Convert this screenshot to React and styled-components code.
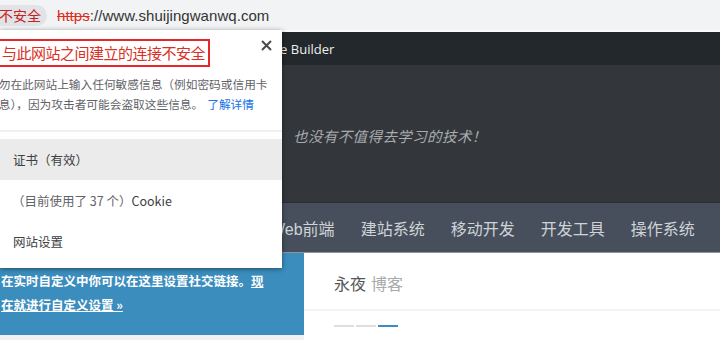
import React from "react";
import styled, { createGlobalStyle } from "styled-components";

const GlobalStyle = createGlobalStyle`
  html, body { margin: 0; padding: 0; }
  body {
    background: #f1f1f1;
    font-family: "Open Sans", "Liberation Sans", "Noto Sans CJK SC", sans-serif;
  }
`;

const CJK = `"Noto Sans CJK SC", "Noto Sans", sans-serif`;

const Page = styled.div`
  position: relative;
  width: 720px;
  height: 340px;
  overflow: hidden;
  background: #f1f1f1;
`;

const BrowserBar = styled.div`
  height: 30px;
  background: #f1f3f4;
  border-bottom: 2px solid #fbfbfb;
  display: flex;
  align-items: center;
  gap: 10px;
  font-family: "Liberation Sans", Arial, ${CJK};
  font-size: 15px;
`;

const Badge = styled.span`
  display: flex;
  align-items: center;
  height: 21px;
  padding: 0 6px 0 0;
  margin-left: -1px;
  border-radius: 0 11px 11px 0;
  background: #e1e3e6;
  color: #c5221f;
  font-family: ${CJK};
  font-size: 14px;
`;

const Url = styled.span`
  color: #333;
  letter-spacing: 0.05px;
`;

const Scheme = styled.span`
  color: #d93025;
  text-decoration: line-through;
`;

const AdminBar = styled.div`
  height: 33px;
  background: #23282d;
  color: #eee;
  display: flex;
  align-items: center;
  padding-left: 258px;
  font-size: 13px;
  font-family: "Open Sans", "Liberation Sans", sans-serif;
`;

const Header = styled.div`
  height: 137px;
  background: #33373c;
  display: flex;
  align-items: center;
  padding: 4px 0 0 293px;
  box-sizing: border-box;
`;

const Tagline = styled.div`
  font-family: ${CJK};
  font-style: italic;
  font-size: 14.5px;
  color: #a9abad;
  letter-spacing: 0.4px;
`;

const Nav = styled.nav`
  height: 49px;
  background: #464f5b;
  border-top: 1px solid #2b2f34;
  border-bottom: 1px solid #8d959e;
  display: flex;
  align-items: center;
  gap: 26px;
  padding-left: 270px;
`;

const NavItem = styled.span`
  font-family: "Liberation Sans", Arial, ${CJK};
  font-size: 16px;
  color: #cfd3d7;
  white-space: nowrap;
`;

const Content = styled.div`
  display: grid;
  grid-template-columns: 304px 1fr;
  height: 89px;
`;

const LeftCol = styled.div`
  display: flex;
  flex-direction: column;
`;

const BluePanel = styled.div`
  height: 82px;
  background: #3b8dbd;
  color: #fff;
  font-family: ${CJK};
  font-weight: bold;
  font-size: 12.5px;
  line-height: 24px;
  padding: 16px 0 0 1px;
  box-sizing: border-box;
`;

const BlueLink = styled.a`
  color: #fff;
  text-decoration: underline;
`;

const WhitePanel = styled.div`
  background: #fff;
  display: flex;
  flex-direction: column;
`;

const SiteTitle = styled.div`
  height: 58px;
  border-bottom: 2px solid #f3f3f3;
  display: flex;
  align-items: center;
  padding: 4px 0 0 30px;
  box-sizing: border-box;
  font-family: ${CJK};
  font-size: 16px;
  gap: 5px;
`;

const TitleWord = styled.span`
  color: ${(p) => (p.$light ? "#a9aaab" : "#555")};
`;

const Tabs = styled.div`
  display: flex;
  gap: 2px;
  padding: 14px 0 0 30px;
`;

const TabBar = styled.span`
  width: ${(p) => p.$w}px;
  height: 2px;
  background: ${(p) => (p.$active ? "#3b8dbd" : "#dedede")};
`;

const Popup = styled.div`
  position: absolute;
  left: 0;
  top: 30px;
  width: 282px;
  height: 238px;
  background: #fff;
  box-shadow: 0 1px 5px rgba(0, 0, 0, 0.45);
  font-family: ${CJK};
  z-index: 5;
`;

const PopupHead = styled.div`
  padding-top: 9px;
  height: 35px;
  box-sizing: border-box;
`;

const WarnTitle = styled.div`
  display: inline-block;
  border: 2px solid #e5262a;
  border-left: none;
  color: #d93025;
  font-size: 15px;
  line-height: 24px;
  padding: 0 3px 0 2px;
  letter-spacing: -0.5px;
`;

const Close = styled.button`
  position: absolute;
  top: 8px;
  right: 9px;
  width: 14px;
  height: 14px;
  padding: 0;
  border: none;
  background: none;
  display: flex;
  align-items: center;
  justify-content: center;
`;

const Message = styled.div`
  margin-left: -13px;
  padding-top: 9px;
  font-size: 11.7px;
  line-height: 20px;
  color: #5f6368;
  height: 65px;
  box-sizing: border-box;
  white-space: nowrap;
`;

const More = styled.a`
  color: #1a73e8;
  text-decoration: none;
  margin-left: 4px;
`;

const Divider = styled.div`
  height: 2px;
  background: #f0f0f0;
  margin-bottom: 7px;
`;

const Row = styled.div`
  height: 41px;
  display: flex;
  align-items: center;
  padding-left: ${(p) => p.$pad || 13}px;
  background: ${(p) => (p.$shaded ? "#ebebeb" : "transparent")};
  font-size: 12.5px;
  color: #3c4043;
`;

const Muted = styled.span`
  color: #5f6368;
`;

export default function App() {
  return (
    <Page>
      <GlobalStyle />
      <BrowserBar>
        <Badge>不安全</Badge>
        <Url>
          <Scheme>https</Scheme>://www.shuijingwanwq.com
        </Url>
      </BrowserBar>
      <AdminBar>Page Builder</AdminBar>
      <Header>
        <Tagline>也没有不值得去学习的技术！</Tagline>
      </Header>
      <Nav>
        {["Web前端", "建站系统", "移动开发", "开发工具", "操作系统"].map((t) => (
          <NavItem key={t}>{t}</NavItem>
        ))}
      </Nav>
      <Content>
        <LeftCol>
          <BluePanel>
            在实时自定义中你可以在这里设置社交链接。
            <BlueLink>
              现
              <br />
              在就进行自定义设置 »
            </BlueLink>
          </BluePanel>
        </LeftCol>
        <WhitePanel>
          <SiteTitle>
            <TitleWord>永夜</TitleWord>
            <TitleWord $light>博客</TitleWord>
          </SiteTitle>
          <Tabs>
            <TabBar $w={20} />
            <TabBar $w={20} />
            <TabBar $w={20} $active />
          </Tabs>
        </WhitePanel>
      </Content>

      <Popup>
        <PopupHead>
          <WarnTitle>与此网站之间建立的连接不安全</WarnTitle>
        </PopupHead>
        <Close aria-label="关闭">
          <svg width="11" height="11" viewBox="0 0 11 11">
            <path d="M1 1 L10 10 M10 1 L1 10" stroke="#4a4a4a" strokeWidth="2" />
          </svg>
        </Close>
        <Message>
          请勿在此网站上输入任何敏感信息（例如密码或信用卡
          <br />
          信息），因为攻击者可能会盗取这些信息。<More>了解详情</More>
        </Message>
        <Divider />
        <Row $shaded>证书（有效）</Row>
        <Row $pad={12}>
          <Muted>（目前使用了 37 个）</Muted>Cookie
        </Row>
        <Row>网站设置</Row>
      </Popup>
    </Page>
  );
}
